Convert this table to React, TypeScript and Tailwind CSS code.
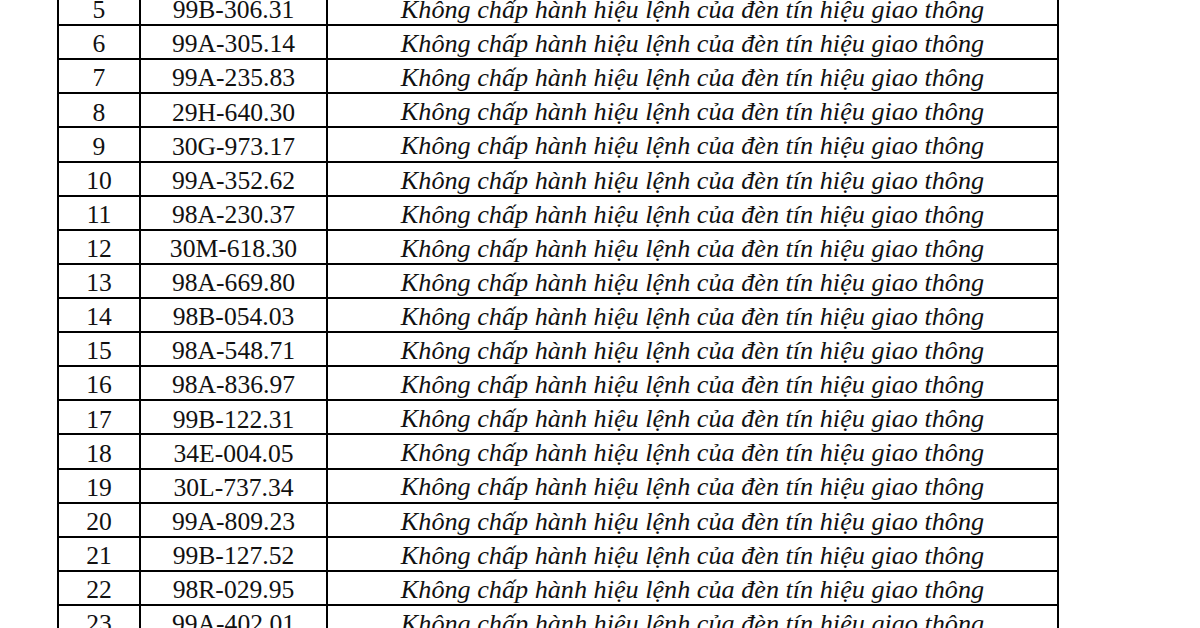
import React from 'react'

const VIOLATION = 'Không chấp hành hiệu lệnh của đèn tín hiệu giao thông'

const plates: [number, string][] = [
  [5, '99B-306.31'],
  [6, '99A-305.14'],
  [7, '99A-235.83'],
  [8, '29H-640.30'],
  [9, '30G-973.17'],
  [10, '99A-352.62'],
  [11, '98A-230.37'],
  [12, '30M-618.30'],
  [13, '98A-669.80'],
  [14, '98B-054.03'],
  [15, '98A-548.71'],
  [16, '98A-836.97'],
  [17, '99B-122.31'],
  [18, '34E-004.05'],
  [19, '30L-737.34'],
  [20, '99A-809.23'],
  [21, '99B-127.52'],
  [22, '98R-029.95'],
  [23, '99A-402.01'],
]

export default function App(): React.JSX.Element {
  return (
    <div className="h-[628px] w-[1200px] overflow-hidden bg-white text-[#111]">
      <div
        className="-mt-[8px] ml-[57px] w-[1002px] border-x-2 border-black text-[25.6px]"
        style={{ fontFamily: '"Liberation Serif", "Times New Roman", serif' }}
      >
        {plates.map(([no, plate]) => (
          <div
            key={no}
            className="flex h-[34.12px] border-b-2 border-black leading-none"
          >
            <div className="flex w-[82px] items-center justify-center border-r-2 border-black pt-[4px]">
              {no}
            </div>
            <div className="flex w-[187px] items-center justify-center border-r-2 border-black pt-[4px]">
              {plate}
            </div>
            <div className="flex flex-1 items-center justify-center pt-[4px] text-[26.2px] italic">
              {VIOLATION}
            </div>
          </div>
        ))}
      </div>
    </div>
  )
}
